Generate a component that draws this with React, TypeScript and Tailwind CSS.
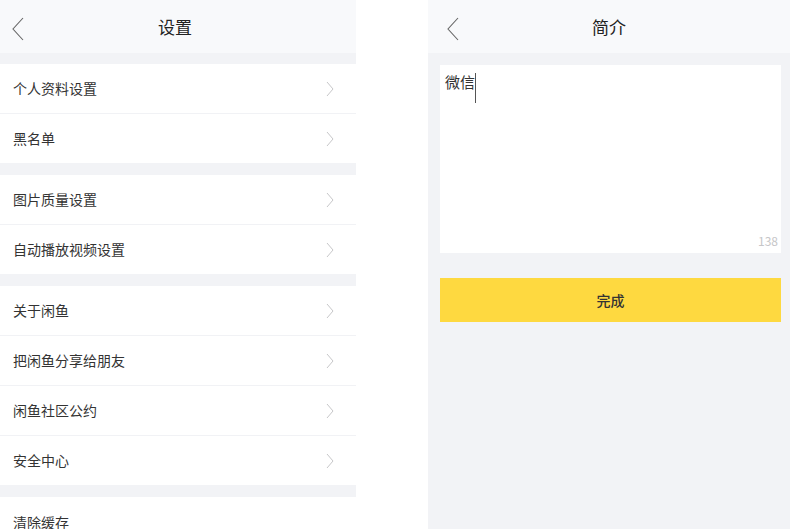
import React from 'react';

const font = { fontFamily: '"Noto Sans CJK SC", "Noto Sans", sans-serif' };

function BackIcon() {
    return (
        <svg width="12" height="24" viewBox="0 0 12 24" fill="none">
            <polyline points="11,1 1,12 11,23" stroke="#666" strokeWidth="1.1" fill="none" />
        </svg>
    );
}

function ChevronIcon() {
    return (
        <svg width="8" height="16" viewBox="0 0 8 16" fill="none">
            <polyline points="1,1 7,8 1,15" stroke="#c7c7c9" strokeWidth="1" fill="none" />
        </svg>
    );
}

const groups: string[][] = [
    ['个人资料设置', '黑名单'],
    ['图片质量设置', '自动播放视频设置'],
    ['关于闲鱼', '把闲鱼分享给朋友', '闲鱼社区公约', '安全中心'],
];

function Row({ label, last }: { label: string; last: boolean }) {
    return (
        <div className={`shrink-0 flex items-center justify-between pl-[13px] pr-[22px] bg-white ${last ? 'h-[49px]' : 'h-[50px] border-b border-[#f1f2f5]'}`}>
            <span className="text-[14px] text-[#333]">{label}</span>
            <ChevronIcon />
        </div>
    );
}

export default function App() {
    return (
        <div className="flex w-[790px] h-[529px] overflow-hidden bg-white" style={font}>
            {/* 设置 */}
            <div className="w-[356px] flex flex-col bg-[#f2f3f6] overflow-hidden">
                <div className="relative shrink-0 h-[53px] bg-[#f8f9fb] flex items-center justify-center">
                    <div className="absolute left-[12px] top-[17px]">
                        <BackIcon />
                    </div>
                    <span className="text-[17px] text-[#222] mr-[6px]">设置</span>
                </div>
                <div className="shrink-0 h-[11px]" />
                {groups.map((g, gi) => (
                    <div key={gi} className={`shrink-0 ${gi > 0 ? 'mt-[12px]' : ''}`}>
                        {g.map((label, i) => (
                            <Row key={label} label={label} last={i === g.length - 1} />
                        ))}
                    </div>
                ))}
                <div className="shrink-0 mt-[12px] h-[50px] bg-white flex items-center pl-[13px]">
                    <span className="text-[14px] text-[#333]">清除缓存</span>
                </div>
            </div>

            <div className="w-[72px] shrink-0 bg-white" />

            {/* 简介 */}
            <div className="flex-1 flex flex-col bg-[#f2f3f6]">
                <div className="relative shrink-0 h-[53px] bg-[#f8f9fb] flex items-center justify-center">
                    <div className="absolute left-[19px] top-[17px]">
                        <BackIcon />
                    </div>
                    <span className="text-[17px] text-[#222]">简介</span>
                </div>
                <div className="shrink-0 ml-[12px] mr-[9px] mt-[12px] h-[188px] bg-white relative">
                    <div className="pl-[5px] pt-[6px] flex items-start">
                        <span className="text-[15px] text-[#333] leading-[22px]">微信</span>
                        <span className="w-[1px] h-[30px] bg-[#555] mt-[2px]" />
                    </div>
                    <span className="absolute right-[3px] bottom-[3px] text-[12px] text-[#c6c6c8]">138</span>
                </div>
                <div className="shrink-0 ml-[12px] mr-[9px] mt-[25px] h-[44px] bg-[#fed940] flex items-center justify-center">
                    <span className="text-[14px] text-[#333] font-medium">完成</span>
                </div>
            </div>
        </div>
    );
}
